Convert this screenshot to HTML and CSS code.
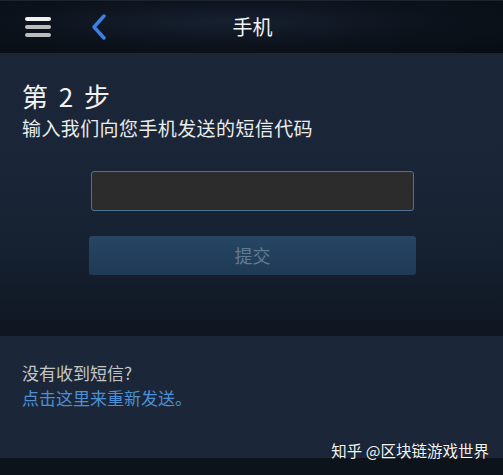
FILE: index.html
```html
<!DOCTYPE html>
<html lang="zh">
<head>
<meta charset="utf-8">
<link rel="stylesheet" href="styles.css">
</head>
<body>
<div class="app">
  <header class="topbar">
    <div class="hamburger">
      <span class="bar bar-top"></span>
      <span class="bar"></span>
      <span class="bar"></span>
    </div>
    <svg class="back" width="16" height="26" viewBox="0 0 16 26"><path d="M13 2 L3 13 L13 24" fill="none" stroke="#3b80e4" stroke-width="3.4" stroke-linecap="round" stroke-linejoin="round"/></svg>
    <div class="title">手机</div>
  </header>
  <section class="step">
    <h1 class="step-title">第 2 步</h1>
    <p class="step-sub">输入我们向您手机发送的短信代码</p>
    <div class="form">
      <div class="code-input"></div>
      <div class="submit">提交</div>
    </div>
  </section>
  <section class="resend">
    <p class="resend-q">没有收到短信?</p>
    <p class="resend-link">点击这里来重新发送。</p>
    <div class="watermark">知乎 @区块链游戏世界</div>
  </section>
  <footer class="bottom"></footer>
</div>
</body>
</html>
```
FILE: styles.css
```css
* { box-sizing: border-box; }
html, body { margin: 0; padding: 0; }
body {
  width: 503px;
  height: 475px;
  overflow: hidden;
  background: #0d131b;
  font-family: "Noto Sans CJK SC", "Noto Sans", sans-serif;
}
.app { display: flex; flex-direction: column; height: 475px; }
.topbar {
  position: relative;
  height: 55px;
  flex: none;
  display: flex;
  align-items: center;
  background: radial-gradient(ellipse at 45% 40%, #162030 0%, #0c121b 55%, #080d14 100%);
  border-top: 1px solid #1c2430;
  border-bottom: 2px solid #1d2531;
}
.hamburger {
  margin-left: 25px;
  width: 26px;
  display: flex;
  flex-direction: column;
  gap: 4px;
}
.bar { display: block; height: 4px; border-radius: 2px; background: #bcbcbc; }
.bar-top { background: #f2f2f2; }
.back { margin-left: 40px; }
.title {
  position: absolute;
  left: 0; right: 0; top: 12px;
  text-align: center;
  color: #f4f4f4;
  font-size: 20px;
  line-height: 28px;
  padding-left: 2px;
}
.step {
  height: 281px;
  flex: none;
  padding: 24px 0 0 22px;
  background: linear-gradient(to bottom, #1b2739 0%, #1a2637 40%, #152030 72%, #0f1620 100%);
}
.step-title {
  margin: 0;
  font-weight: normal;
  color: #f2f2f2;
  font-size: 26px;
  line-height: 34px;
  word-spacing: 5px;
}
.step-sub {
  margin: 0;
  color: #ececec;
  font-size: 19px;
  letter-spacing: 0.4px;
  line-height: 30px;
}
.form {
  margin: 28px 0 0 67px;
  width: 327px;
  display: flex;
  flex-direction: column;
  gap: 25px;
}
.code-input {
  margin-left: 2px;
  width: 323px;
  height: 40px;
  background: #2c2c2c;
  border: 1px solid #4f7192;
  border-radius: 3px;
}
.submit {
  width: 327px;
  height: 39px;
  border-radius: 3px;
  background: linear-gradient(to bottom, #264663 0%, #1f3a55 100%);
  color: #607c95;
  font-size: 18px;
  line-height: 38px;
  text-align: center;
}
.resend {
  position: relative;
  height: 122px;
  flex: none;
  background: #1b2738;
  padding: 24px 0 0 22px;
}
.resend-q, .resend-link {
  margin: 0;
  font-size: 17px;
  line-height: 25px;
}
.resend-q { color: #c3c5c7; }
.resend-link { color: #4b8fd4; }
.watermark {
  position: absolute;
  right: 14px;
  bottom: -3px;
  color: #f4f4f4;
  font-size: 15.5px;
  line-height: 22px;
  text-shadow: 0 0 2px rgba(0,0,0,0.6);
}
.bottom { flex: 1; background: #0d131b; }
```
